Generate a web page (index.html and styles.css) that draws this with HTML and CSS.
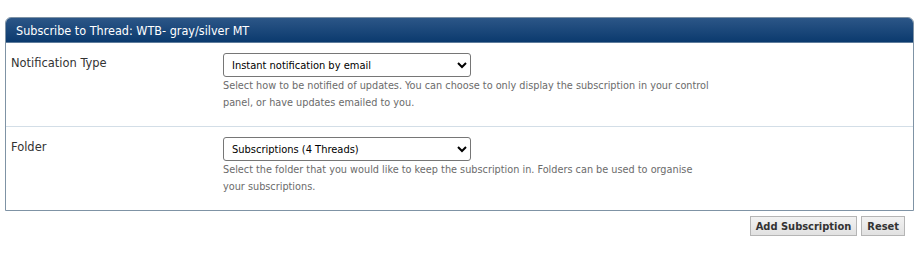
FILE: index.html
```html
<!DOCTYPE html>
<html>
<head>
<meta charset="utf-8">
<link rel="stylesheet" href="styles.css">
<title>Subscribe to Thread</title>
</head>
<body>
<div class="page">
  <div class="panel">
    <div class="panel-head">Subscribe to Thread: WTB- gray/silver MT</div>
    <div class="row">
      <div class="label">Notification Type</div>
      <div class="field">
        <select class="sel">
          <option>Instant notification by email</option>
        </select>
        <div class="desc">Select how to be notified of updates. You can choose to only display the subscription in your control panel, or have updates emailed to you.</div>
      </div>
    </div>
    <div class="row last">
      <div class="label">Folder</div>
      <div class="field">
        <select class="sel">
          <option>Subscriptions (4 Threads)</option>
        </select>
        <div class="desc">Select the folder that you would like to keep the subscription in. Folders can be used to organise your subscriptions.</div>
      </div>
    </div>
  </div>
  <div class="actions">
    <button class="btn">Add Subscription</button>
    <button class="btn">Reset</button>
  </div>
</div>
</body>
</html>
```
FILE: styles.css
```css
html, body {
  margin: 0;
  padding: 0;
  background: #fff;
}
body {
  font-family: "DejaVu Sans Condensed", "DejaVu Sans", sans-serif;
  color: #333;
}
.page {
  padding: 17px 8px 0 5px;
}
.panel {
  border: 1px solid #7f93a5;
  border-radius: 6px 6px 0 0;
  overflow: hidden;
}
.panel-head {
  height: 24px;
  line-height: 25px;
  padding-left: 10px;
  color: #fff;
  font-size: 12.5px;
  background: linear-gradient(#2c5687, #0b3a6e);
  border-bottom: 1px solid #5f7c9c;
}
.row {
  display: flex;
  padding: 10px 0 15px 0;
  border-bottom: 1px solid #d3dee7;
}
.row.last {
  border-bottom: none;
}
.label {
  width: 212px;
  padding-left: 5px;
  font-size: 12.75px;
  color: #333;
  padding-top: 2px;
}
.field {
  width: 492px;
}
.sel {
  display: block;
  width: 248px;
  height: 24px;
  font-family: inherit;
  font-size: 11px;
  color: #000;
  border: 1px solid #767676;
  border-radius: 3px;
  background: #fff;
  padding: 0 4px;
  margin: 0;
}
.desc {
  font-size: 10.8px;
  color: #6b6b6b;
  line-height: 17px;
}
.actions {
  display: flex;
  justify-content: flex-end;
  gap: 4px;
  padding: 5px 9px 0 0;
}
.btn {
  font-family: inherit;
  font-size: 11px;
  font-weight: bold;
  color: #333;
  height: 20px;
  padding: 0 5px;
  margin: 0;
  border: 1px solid #b5b5b5;
  background: linear-gradient(#f2f2f2, #e1e1e1);
}
```
